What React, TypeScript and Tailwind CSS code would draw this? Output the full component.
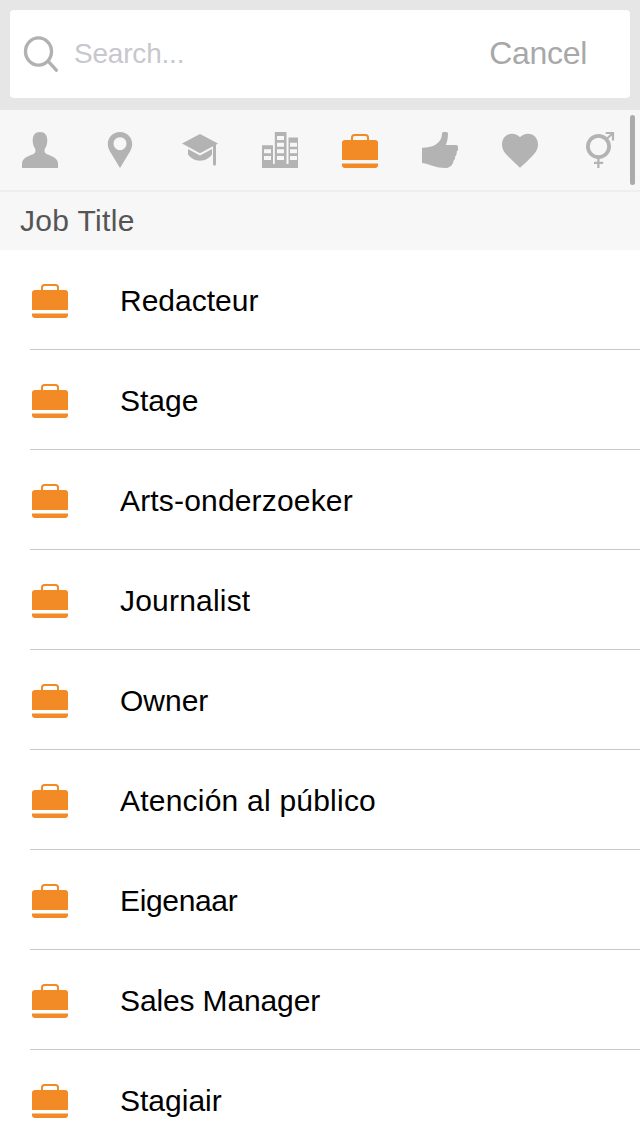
import React from 'react'

interface IconProps {
    className?: string
}

const PersonIcon: React.FC<IconProps> = ({ className }) => (
    <svg viewBox="0 0 40 40" fill="currentColor" className={className}>
        <path d="M20 2c4.900 0 7.300 3.400 7.300 8.500 0 3.300-.8 5.700-2 7.500-.6.900-.8 1.500-.8 2.500 0 2.200 1 3.200 3.800 4.300C34 27 38 29 38 33.800V38H2v-4.200c0-4.800 4-6.800 9.700-9 2.800-1.100 3.800-2.100 3.800-4.300 0-1-.2-1.600-.8-2.500-1.200-1.800-2-4.200-2-7.500C12.700 5.400 15.100 2 20 2z" />
    </svg>
)

const PinIcon: React.FC<IconProps> = ({ className }) => (
    <svg viewBox="0 0 40 40" fill="currentColor" className={className}>
        <path
            fillRule="evenodd"
            d="M20 2c6.900 0 12.200 5.200 12.200 12 0 2.500-.8 5-2.200 7.400L20 38 10 21.400C8.600 19 7.800 16.500 7.800 14 7.800 7.200 13.100 2 20 2zm0 5.200a6.500 6.500 0 1 0 0 13 6.500 6.500 0 0 0 0-13z"
        />
    </svg>
)

const SchoolIcon: React.FC<IconProps> = ({ className }) => (
    <svg viewBox="0 0 40 40" fill="currentColor" className={className}>
        <path d="M20 4l18 9.500-2 1.200v19.800L34.500 36 33 34.500V16.300L20 23.200 2 13.500z" />
        <path d="M8 19l12 6.600L32 19v5.600c-2.700 3.700-6.900 6.100-12 6.100S10.700 28.300 8 24.600z" />
    </svg>
)

const CompanyIcon: React.FC<IconProps> = ({ className }) => (
    <svg viewBox="0 0 40 40" fill="currentColor" className={className}>
        <path
            fillRule="evenodd"
            d="M2 15.300h11V34h1.800V2h11.700v32h2V7.400H38V38H2z
               M4 19.300v4h7v-4zM4 26v4h7v-4z
               M17 6v4h7V6zM17 12.700v4h7v-4zM17 19.300v4h7v-4zM17 26v4h7v-4z
               M30 12.700v4h7v-4zM30 19.300v4h7v-4zM30 26v4h7v-4z"
        />
    </svg>
)

const BriefcaseIcon: React.FC<IconProps> = ({ className }) => (
    <svg viewBox="0 0 40 40" fill="currentColor" className={className}>
        <path d="M12 11V7.500A2.500 2.500 0 0 1 14.500 5h11A2.500 2.500 0 0 1 28 7.500V11" fill="none" stroke="currentColor" strokeWidth="2" />
        <path d="M2 30V13a3 3 0 0 1 3-3h30a3 3 0 0 1 3 3v17z" />
        <path d="M2 33.500h36V35a3 3 0 0 1-3 3H5a3 3 0 0 1-3-3z" />
    </svg>
)

const ThumbIcon: React.FC<IconProps> = ({ className }) => (
    <svg viewBox="0 0 40 40" fill="currentColor" className={className}>
        <path d="M2 17.800c6-.2 11-1 14.500-3.700 3.400-2.700 5.300-5.600 5.500-10.300.1-1.300.7-1.800 1.700-1.800h2.600c1.100 0 1.700.7 1.700 1.800 0 4.200-.7 7.700-2.200 11.200h10.400c1.200 0 1.800.8 1.800 1.900v2.700c0 1-.5 1.600-1.300 1.900.2 2.200-.3 3.900-1.500 4.700 0 2.300-.5 3.800-1.700 4.500-.6 4.300-3.600 7.300-8.200 7.300-9.500 0-14.800-3.700-23.300-5z" />
    </svg>
)

const HeartIcon: React.FC<IconProps> = ({ className }) => (
    <svg viewBox="0 0 40 40" fill="currentColor" className={className}>
        <path d="M20 7.300C22 5 24.800 3.800 28 3.800c5.800 0 10 4.600 10 10.700 0 4.300-1.800 7.500-5 10.700-4.200 4.300-8.500 8.500-13 12.600-4.500-4.100-8.800-8.300-13-12.600-3.200-3.200-5-6.400-5-10.700C2 8.400 6.200 3.800 12 3.800c3.200 0 6 1.200 8 3.500z" />
    </svg>
)

const GenderIcon: React.FC<IconProps> = ({ className }) => (
    <svg viewBox="0 0 40 40" fill="none" stroke="currentColor" className={className}>
        <circle cx="18.500" cy="16.500" r="10.600" strokeWidth="3.800" />
        <path d="M26 9.500L32.500 3.500M25.700 3H33v7.500M18.400 28v10M14 32.900h9.200" strokeWidth="2.200" />
    </svg>
)

const SearchIcon: React.FC<IconProps> = ({ className }) => (
    <svg viewBox="0 0 40 40" fill="none" stroke="currentColor" className={className}>
        <ellipse cx="18.500" cy="17.500" rx="13" ry="13.600" strokeWidth="3.400" />
        <path d="M28.300 27.300L36.300 36.200" strokeWidth="3.400" strokeLinecap="round" />
    </svg>
)

const filters = [
    { name: 'person', Icon: PersonIcon },
    { name: 'location', Icon: PinIcon },
    { name: 'school', Icon: SchoolIcon },
    { name: 'company', Icon: CompanyIcon },
    { name: 'job', Icon: BriefcaseIcon },
    { name: 'likes', Icon: ThumbIcon },
    { name: 'relationship', Icon: HeartIcon },
    { name: 'gender', Icon: GenderIcon },
]

const jobs = [
    { title: 'Redacteur', tracking: 'tracking-normal' },
    { title: 'Stage', tracking: 'tracking-normal' },
    { title: 'Arts-onderzoeker', tracking: 'tracking-[0.17px]' },
    { title: 'Journalist', tracking: 'tracking-[0.2px]' },
    { title: 'Owner', tracking: 'tracking-normal' },
    { title: 'Atención al público', tracking: 'tracking-[0.22px]' },
    { title: 'Eigenaar', tracking: 'tracking-[-0.35px]' },
    { title: 'Sales Manager', tracking: 'tracking-[-0.13px]' },
    { title: 'Stagiair', tracking: 'tracking-normal' },
]

const SearchBar: React.FC = () => {
    return (
        <header className="h-[110px] shrink-0 bg-[#e6e6e6] px-2.5 pt-2.5">
            <div className="flex h-[88px] items-center rounded-[4px] bg-white pr-[43px] pl-2.5">
                <SearchIcon className="size-10 text-[#b0b2b1]" />
                <span className="ml-3.5 flex-1 text-[28px] leading-10 tracking-[-0.2px] text-[#c7c7cd]">Search...</span>
                <button className="pb-0.5 text-[32px] leading-10 tracking-[-0.3px] text-[#a8a8a8]">Cancel</button>
            </div>
        </header>
    )
}

const FilterBar: React.FC = () => {
    return (
        <nav className="relative flex h-[82px] shrink-0 border-b-2 border-[#eeeeee] bg-[#f7f7f7]">
            {filters.map(({ name, Icon }) => (
                <button key={name} aria-label={name} className="flex w-20 items-center justify-center">
                    <Icon className={name === 'job' ? 'size-10 text-[#f28a25]' : 'size-10 text-[#b3b3b3]'} />
                </button>
            ))}
            <div className="absolute top-[5px] right-[5px] h-[70px] w-[5px] rounded-full bg-[#ababab]" />
        </nav>
    )
}

const App: React.FC = () => {
    return (
        <div className="flex h-[1136px] w-[640px] flex-col overflow-hidden bg-white font-['Liberation_Sans',Arial,sans-serif]">
            <SearchBar />
            <FilterBar />
            <h2 className="h-[58px] shrink-0 bg-[#f7f7f7] pl-5 text-[30px] leading-[58px] tracking-[0.33px] text-[#555555]">
                Job Title
            </h2>
            <ul>
                {jobs.map((job) => (
                    <li key={job.title} className="h-[100px] pl-[30px]">
                        <div className="flex h-full items-center border-b border-[#c8c7cc] pt-px">
                            <BriefcaseIcon className="size-10 text-[#f28a25]" />
                            <span className={`ml-[50px] pt-0.5 text-[30px] leading-10 text-black ${job.tracking}`}>{job.title}</span>
                        </div>
                    </li>
                ))}
            </ul>
        </div>
    )
}

export default App
